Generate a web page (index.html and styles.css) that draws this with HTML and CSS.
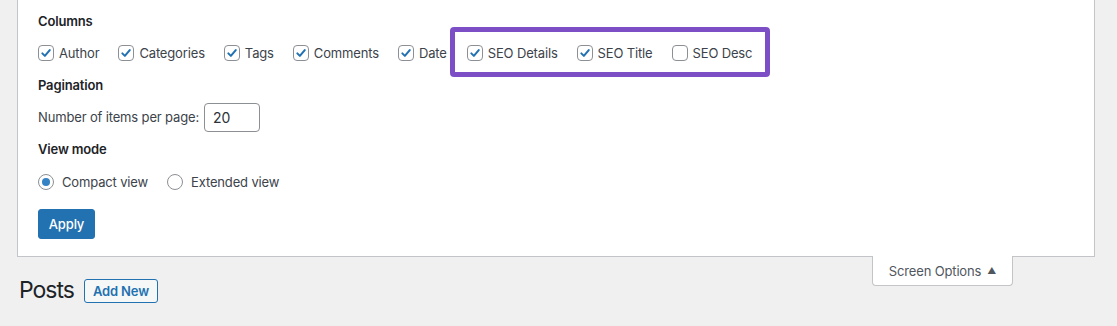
FILE: index.html
```html
<!DOCTYPE html>
<html>
<head>
<meta charset="utf-8">
<link rel="stylesheet" href="styles.css">
</head>
<body>
<div class="screen-meta">
  <div class="section-title">Columns</div>
  <div class="check-row">
    <label class="opt"><span class="cb on"><svg viewBox="0 0 16 16"><path d="M3.8 8.4 L6.7 11.3 L12.3 4.6"/></svg></span>Author</label>
    <label class="opt"><span class="cb on"><svg viewBox="0 0 16 16"><path d="M3.8 8.4 L6.7 11.3 L12.3 4.6"/></svg></span>Categories</label>
    <label class="opt"><span class="cb on"><svg viewBox="0 0 16 16"><path d="M3.8 8.4 L6.7 11.3 L12.3 4.6"/></svg></span>Tags</label>
    <label class="opt"><span class="cb on"><svg viewBox="0 0 16 16"><path d="M3.8 8.4 L6.7 11.3 L12.3 4.6"/></svg></span>Comments</label>
    <label class="opt"><span class="cb on"><svg viewBox="0 0 16 16"><path d="M3.8 8.4 L6.7 11.3 L12.3 4.6"/></svg></span>Date</label>
    <div class="highlight">
      <label class="opt"><span class="cb on"><svg viewBox="0 0 16 16"><path d="M3.8 8.4 L6.7 11.3 L12.3 4.6"/></svg></span>SEO Details</label>
      <label class="opt"><span class="cb on"><svg viewBox="0 0 16 16"><path d="M3.8 8.4 L6.7 11.3 L12.3 4.6"/></svg></span>SEO Title</label>
      <label class="opt last"><span class="cb"></span>SEO Desc</label>
    </div>
  </div>
  <div class="section-title pag">Pagination</div>
  <div class="per-page">
    <span>Number of items per page:</span>
    <span class="num-input">20</span>
  </div>
  <div class="section-title vm">View mode</div>
  <div class="radio-row">
    <label class="opt"><span class="rb on"></span>Compact view</label>
    <label class="opt"><span class="rb"></span>Extended view</label>
  </div>
  <div class="apply-row"><span class="btn-primary">Apply</span></div>
</div>
<div class="header-row">
  <div class="title-group">
    <h1 class="page-title">Posts</h1>
    <span class="btn-secondary">Add New</span>
  </div>
  <div class="tab">Screen Options <span class="arrow">&#9650;</span></div>
</div>
</body>
</html>
```
FILE: styles.css
```css
html, body {
  margin: 0;
  padding: 0;
  background: #f0f0f1;
  font-family: Inter, "Liberation Sans", sans-serif;
  font-size: 13px;
  letter-spacing: -0.15px;
  color: #3c434a;
}

.screen-meta {
  margin-left: 17px;
  width: 1078px;
  background: #fff;
  border: 1px solid #c3c4c7;
  border-top: none;
  padding: 11px 20px 16px 20px;
  box-sizing: border-box;
  height: 257px;
}

.section-title {
  font-weight: 600;
  color: #1d2327;
  line-height: 20px;
  height: 20px;
}

.check-row {
  display: flex;
  align-items: center;
  height: 26px;
  margin-top: 9px;
}

.opt {
  display: flex;
  align-items: center;
  margin-right: 19px;
  line-height: 20px;
  white-space: nowrap;
}

.opt.last {
  margin-right: 0;
}

.cb {
  width: 16px;
  height: 16px;
  box-sizing: border-box;
  border: 1px solid #8c8f94;
  border-radius: 4px;
  margin-right: 5px;
  display: flex;
  align-items: center;
  justify-content: center;
  background: #fff;
}

.cb svg {
  width: 14px;
  height: 14px;
  fill: none;
  stroke: #2271b1;
  stroke-width: 2.3;
  stroke-linecap: round;
  stroke-linejoin: round;
}

.highlight {
  display: flex;
  align-items: center;
  position: relative;
  margin-left: 1px;
}

.highlight::before {
  content: "";
  position: absolute;
  left: -17px;
  right: -18px;
  top: -16px;
  bottom: -14px;
  border: 5px solid #7d4fc6;
  border-radius: 4px;
  pointer-events: none;
}

.pag {
  margin-top: 9px;
}

.per-page {
  display: flex;
  align-items: center;
  margin-top: 7px;
  height: 30px;
}

.num-input {
  margin-left: 5px;
  width: 56px;
  height: 29px;
  box-sizing: border-box;
  border: 1px solid #8c8f94;
  border-radius: 4px;
  padding-left: 8px;
  font-size: 14px;
  color: #2c3338;
  display: flex;
  align-items: center;
}

.vm {
  margin-top: 7px;
}

.radio-row {
  display: flex;
  align-items: center;
  margin-top: 13px;
  height: 20px;
}

.rb {
  width: 16px;
  height: 16px;
  box-sizing: border-box;
  border: 1px solid #8c8f94;
  border-radius: 50%;
  margin-right: 8px;
  display: flex;
  align-items: center;
  justify-content: center;
}

.rb.on::after {
  content: "";
  width: 8px;
  height: 8px;
  border-radius: 50%;
  background: #3582c4;
}

.apply-row {
  margin-top: 17px;
  display: flex;
}

.btn-primary {
  display: inline-flex;
  align-items: center;
  justify-content: center;
  width: 57px;
  height: 30px;
  box-sizing: border-box;
  background: #2271b1;
  border: 1px solid #2271b1;
  border-radius: 3px;
  color: #fff;
  font-weight: 500;
}

.header-row {
  display: flex;
  justify-content: space-between;
  align-items: flex-start;
}

.title-group {
  display: flex;
  align-items: center;
  margin-left: 19px;
  margin-top: 19px;
}

.page-title {
  margin: 0;
  font-size: 23px;
  font-weight: 400;
  letter-spacing: -1px;
  color: #1d2327;
  line-height: 29px;
}

.btn-secondary {
  margin-left: 10px;
  display: inline-flex;
  align-items: center;
  justify-content: center;
  width: 74px;
  height: 24px;
  box-sizing: border-box;
  border: 1px solid #2271b1;
  border-radius: 3px;
  background: #f6f7f7;
  color: #2271b1;
  font-weight: 600;
}

.tab {
  margin-top: -1px;
  margin-right: 104px;
  width: 141px;
  height: 30px;
  box-sizing: border-box;
  background: #fff;
  border: 1px solid #c3c4c7;
  border-top: none;
  border-radius: 0 0 4px 4px;
  display: flex;
  align-items: center;
  justify-content: center;
  color: #50575e;
}

.arrow {
  font-size: 9px;
  margin-left: 6px;
  color: #50575e;
}
```
